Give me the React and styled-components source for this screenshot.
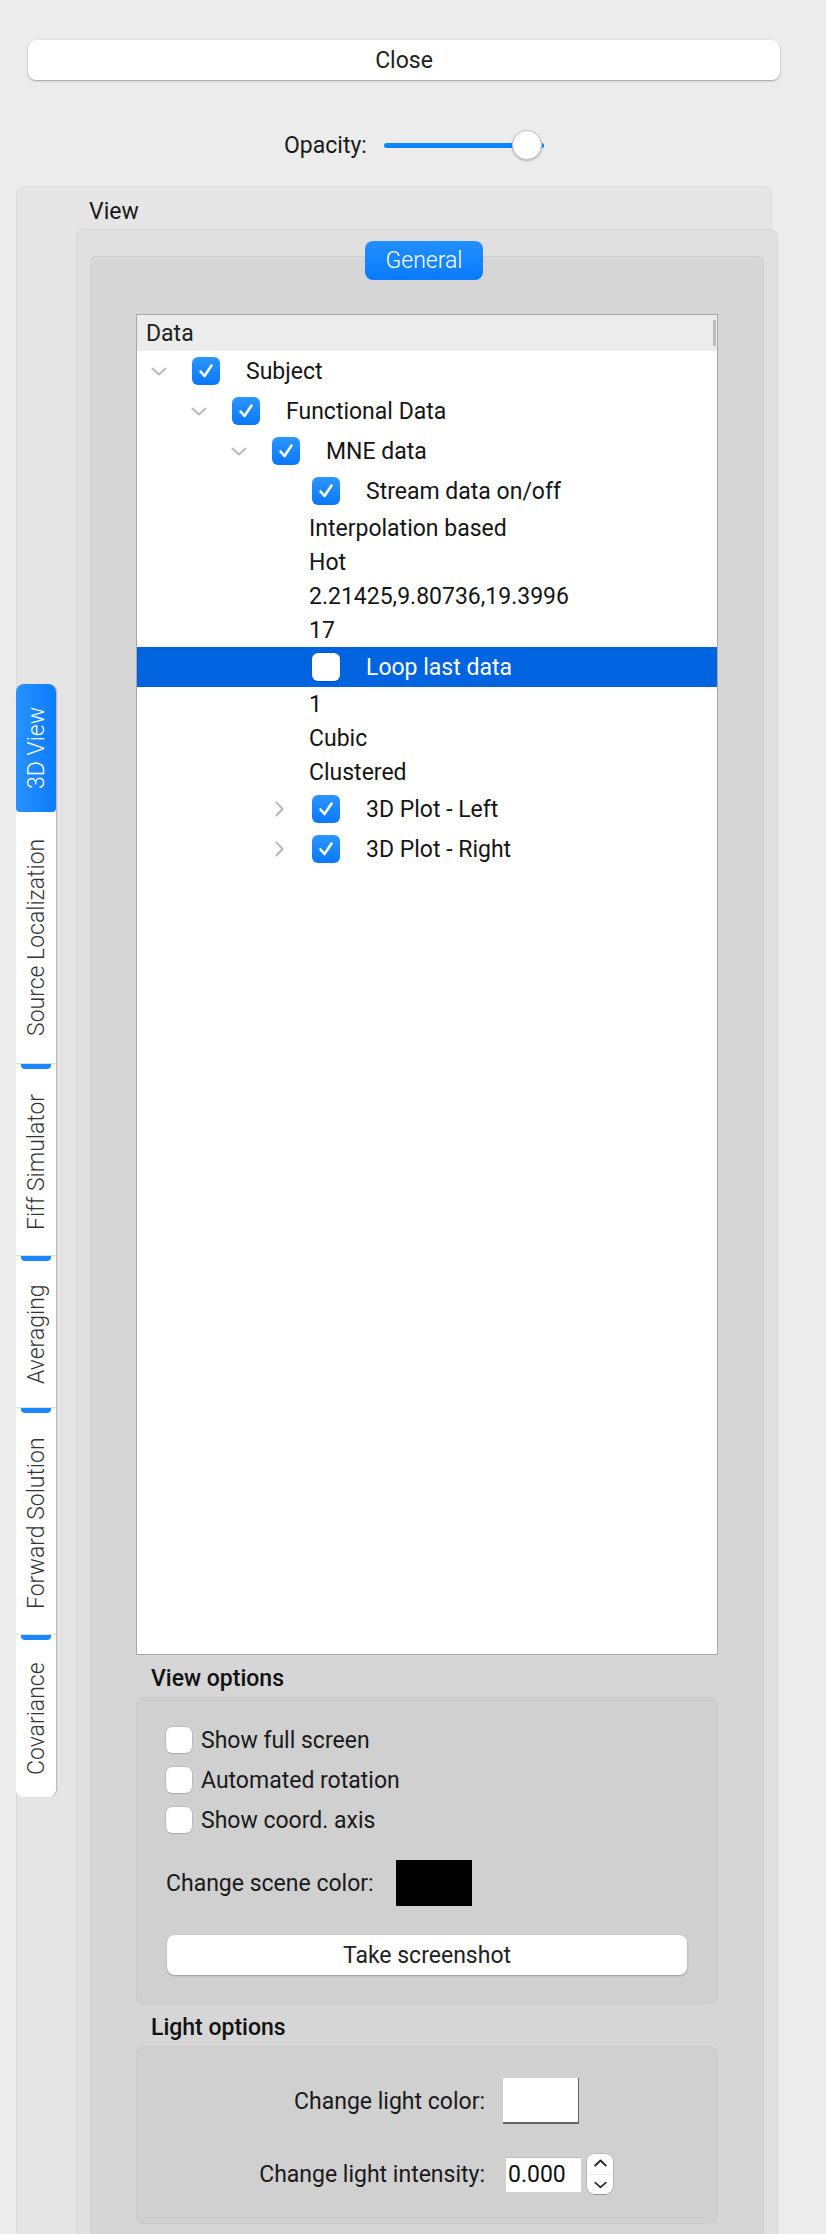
import React from 'react'
import styled, { createGlobalStyle } from 'styled-components'

const GlobalStyle = createGlobalStyle`
  html, body {
    margin: 0;
    padding: 0;
    background: #ececec;
    font-family: Roboto, "Liberation Sans", sans-serif;
    font-size: 23px;
    color: #1a1a1a;
  }
  * { box-sizing: border-box; }
`

const Page = styled.div`
  padding-top: 40px;
  width: 826px;
  overflow: hidden;
`

const CloseButton = styled.button`
  display: block;
  margin-left: 28px;
  width: 752px;
  height: 40px;
  border: none;
  border-radius: 8px;
  background: #fff;
  box-shadow: 0 1px 2px rgba(0, 0, 0, 0.28), 0 0 0 0.5px rgba(0, 0, 0, 0.08);
  font: inherit;
  color: #222;
`

const OpacityRow = styled.div`
  display: flex;
  align-items: center;
  gap: 17px;
  height: 30px;
  margin-top: 50px;
  padding-left: 284px;
`

const SliderTrack = styled.div`
  position: relative;
  width: 160px;
  height: 5px;
  border-radius: 3px;
  background: #0a84ff;
`

const SliderThumb = styled.div`
  position: absolute;
  top: -13px;
  left: ${p => p.$pos}px;
  width: 30px;
  height: 30px;
  border-radius: 50%;
  background: #fff;
  border: 1px solid #c4c4c4;
  box-shadow: 0 1px 2px rgba(0, 0, 0, 0.25);
`

const OuterPanel = styled.div`
  display: flex;
  align-items: flex-start;
  margin: 26px 0 0 16px;
  width: 756px;
  background: #e5e5e5;
  border: 1px solid #dcdcdc;
  border-radius: 8px 8px 0 0;
`

const TabBar = styled.div`
  display: flex;
  flex-direction: column;
  flex: none;
  width: 40px;
  margin-top: 497px;
  margin-left: -1px;
  background: #fff;
  border-radius: 8px;
  box-shadow: 1px 0 1px rgba(0, 0, 0, 0.22);
`

const SideTab = styled.div`
  display: flex;
  flex-direction: column;
  align-items: center;
  flex: none;
  height: ${p => p.$len}px;
  border-top: ${p => (p.$first || p.$afterActive ? 'none' : '1px solid #dedede')};
  border-radius: ${p => (p.$first ? '8px 8px 4px 4px' : p.$last ? '0 0 8px 8px' : '0')};
  background: ${p => (p.$active ? 'linear-gradient(90deg, #2a92ff, #0a7cff)' : '#fff')};
  color: ${p => (p.$active ? '#fff' : '#333')};
`

const TabStrip = styled.div`
  width: 30px;
  height: 5px;
  flex: none;
  border-radius: 0 0 4px 4px;
  background: #1a86ff;
`

const SideTabText = styled.span`
  flex: 1;
  display: flex;
  align-items: center;
  justify-content: center;
  writing-mode: vertical-rl;
  transform: rotate(180deg);
  white-space: nowrap;
  font-weight: 300;
`

const Content = styled.div`
  flex: none;
  width: 702px;
  margin-left: 20px;
  margin-right: -7px;
`

const ViewTitle = styled.div`
  padding: 11px 0 0 13px;
  line-height: 28px;
`

const TabFrame = styled.div`
  margin-top: 3px;
  padding: 11px 13px 0 13px;
  background: #e0e0e0;
  border: 1px solid #d6d6d6;
  border-radius: 8px;
  display: flex;
  flex-direction: column;
`

const TopTab = styled.div`
  align-self: center;
  position: relative;
  z-index: 1;
  width: 118px;
  height: 39px;
  margin-left: -6px;
  margin-bottom: -24px;
  display: flex;
  align-items: center;
  justify-content: center;
  border-radius: 8px;
  background: linear-gradient(180deg, #2290ff, #0a7aff);
  color: #fff;
  font-weight: 300;
`

const Pane = styled.div`
  padding: 57px 45px 30px 45px;
  background: #d6d6d6;
  border: 1px solid #cfcfcf;
  border-radius: 6px;
`

const Tree = styled.div`
  height: 1341px;
  background: #fff;
  border: 1px solid #a9a9a9;
`

const TreeHeader = styled.div`
  display: flex;
  align-items: center;
  justify-content: space-between;
  height: 36px;
  padding-left: 9px;
  background: #ececec;
  color: #222;
`

const HeaderHandle = styled.div`
  width: 3px;
  height: 26px;
  margin-right: 1px;
  background: #bdbdbd;
`

const TreeRow = styled.div`
  display: flex;
  align-items: center;
  height: 40px;
  padding-left: ${p => 13 + p.$level * 40}px;
  background: ${p => (p.$selected ? '#0064e1' : 'transparent')};
  color: ${p => (p.$selected ? '#fff' : '#151515')};
`

const TextRow = styled.div`
  display: flex;
  align-items: center;
  height: 34px;
  padding-left: 172px;
  color: #151515;
`

const Expander = styled.div`
  width: 18px;
  height: 18px;
  flex: none;
  display: flex;
  align-items: center;
  justify-content: center;
`

const CheckBox = styled.div`
  width: ${p => p.$size}px;
  height: ${p => p.$size}px;
  flex: none;
  display: flex;
  align-items: center;
  justify-content: center;
  border-radius: 6px;
  background: ${p => (p.$checked ? 'linear-gradient(180deg, #2b95ff, #0a78ff)' : '#fff')};
  box-shadow: ${p => (p.$checked ? 'none' : '0 0 0 0.5px rgba(0,0,0,0.18), 0 1px 1px rgba(0,0,0,0.12)')};
`

const TreeCheck = styled(CheckBox)`
  margin-left: 24px;
`

const TreeLabel = styled.span`
  margin-left: 26px;
  white-space: nowrap;
`

const GroupTitle = styled.div`
  margin-top: 10px;
  padding-left: 15px;
  line-height: 28px;
  font-weight: 500;
  color: #111;
`

const GroupBox = styled.div`
  margin-top: 4px;
  background: #d0d0d0;
  border: 1px solid #cacaca;
  border-radius: 8px;
  padding: ${p => p.$pad};
`

const OptionRow = styled.div`
  display: flex;
  align-items: center;
  height: 40px;
  gap: 9px;
`

const ColorRow = styled.div`
  display: flex;
  align-items: center;
  gap: 22px;
  margin-top: 20px;
`

const Swatch = styled.div`
  width: 76px;
  height: 46px;
  flex: none;
  background: ${p => p.$color};
  border-right: ${p => (p.$raised ? '1px solid #666' : 'none')};
  border-bottom: ${p => (p.$raised ? '2px solid #666' : 'none')};
`

const WideButton = styled.button`
  display: block;
  width: 520px;
  height: 40px;
  margin-top: 29px;
  margin-left: 1px;
  border: none;
  border-radius: 8px;
  background: #fff;
  box-shadow: 0 1px 2px rgba(0, 0, 0, 0.28);
  font: inherit;
  color: #222;
`

const FormGrid = styled.div`
  display: grid;
  grid-template-columns: 348px auto;
  column-gap: 18px;
  row-gap: 30px;
  align-items: center;
  justify-content: start;
`

const FormLabel = styled.div`
  text-align: right;
  white-space: nowrap;
`

const SpinGroup = styled.div`
  display: flex;
  align-items: center;
  gap: 6px;
  margin-left: 3px;
`

const SpinInput = styled.div`
  width: 75px;
  height: 35px;
  padding-left: 2px;
  display: flex;
  align-items: center;
  background: #fff;
  border-top: 1px solid #bdbdbd;
  color: #111;
`

const SpinButtons = styled.div`
  width: 26px;
  height: 40px;
  display: flex;
  flex-direction: column;
  align-items: center;
  justify-content: space-between;
  padding: 5px 0;
  border-radius: 8px;
  box-shadow: 0 0 0 0.5px rgba(0, 0, 0, 0.2), 0 1px 1px rgba(0, 0, 0, 0.2);
  background: linear-gradient(#fff 49%, #e6e6e6 50%, #fff 54%);
`

const ChevronDown = ({ color = '#b8b8b8', w = 16, h = 9 }) => (
  <svg width={w} height={h} viewBox="0 0 16 9">
    <polyline points="1.5,1.5 8,7.5 14.5,1.5" fill="none" stroke={color} strokeWidth="2" strokeLinecap="round" strokeLinejoin="round" />
  </svg>
)

const ChevronRight = () => (
  <svg width="9" height="16" viewBox="0 0 9 16">
    <polyline points="1.5,1.5 7.5,8 1.5,14.5" fill="none" stroke="#b8b8b8" strokeWidth="2" strokeLinecap="round" strokeLinejoin="round" />
  </svg>
)

const ChevronUp = ({ color, w, h }) => (
  <svg width={w} height={h} viewBox="0 0 16 9">
    <polyline points="1.5,7.5 8,1.5 14.5,7.5" fill="none" stroke={color} strokeWidth="2.4" strokeLinecap="round" strokeLinejoin="round" />
  </svg>
)

const Tick = () => (
  <svg width="16" height="16" viewBox="0 0 16 16">
    <polyline points="2.5,8.5 6.5,13 13.5,2.5" fill="none" stroke="#fff" strokeWidth="2.6" strokeLinecap="round" strokeLinejoin="round" />
  </svg>
)

const sideTabs = [
  { label: '3D View', len: 128, active: true },
  { label: 'Source Localization', len: 251 },
  { label: 'Fiff Simulator', len: 192 },
  { label: 'Averaging', len: 152 },
  { label: 'Forward Solution', len: 227 },
  { label: 'Covariance', len: 163 },
]

const treeRows = [
  { level: 0, expand: 'down', checked: true, label: 'Subject' },
  { level: 1, expand: 'down', checked: true, label: 'Functional Data' },
  { level: 2, expand: 'down', checked: true, label: 'MNE data' },
  { level: 3, checked: true, label: 'Stream data on/off' },
  { text: 'Interpolation based' },
  { text: 'Hot' },
  { text: '2.21425,9.80736,19.3996' },
  { text: '17' },
  { level: 3, checked: false, label: 'Loop last data', selected: true },
  { text: '1' },
  { text: 'Cubic' },
  { text: 'Clustered' },
  { level: 3, expand: 'right', checked: true, label: '3D Plot - Left' },
  { level: 3, expand: 'right', checked: true, label: '3D Plot - Right' },
]

function TreeItem({ row }) {
  if (row.text) return <TextRow>{row.text}</TextRow>
  return (
    <TreeRow $level={row.level} $selected={row.selected}>
      <Expander>
        {row.expand === 'down' && <ChevronDown />}
        {row.expand === 'right' && <ChevronRight />}
      </Expander>
      <TreeCheck $size={28} $checked={row.checked}>{row.checked && <Tick />}</TreeCheck>
      <TreeLabel>{row.label}</TreeLabel>
    </TreeRow>
  )
}

export default function App() {
  return (
    <Page>
      <GlobalStyle />
      <CloseButton>Close</CloseButton>
      <OpacityRow>
        <span>Opacity:</span>
        <SliderTrack>
          <SliderThumb $pos={128} />
        </SliderTrack>
      </OpacityRow>

      <OuterPanel>
        <TabBar>
          {sideTabs.map((t, i) => (
            <SideTab
              key={t.label}
              $len={t.len}
              $active={t.active}
              $first={i === 0}
              $last={i === sideTabs.length - 1}
              $afterActive={i > 0 && sideTabs[i - 1].active}
            >
              {i > 1 && <TabStrip />}
              <SideTabText>{t.label}</SideTabText>
            </SideTab>
          ))}
        </TabBar>

        <Content>
          <ViewTitle>View</ViewTitle>
          <TabFrame>
            <TopTab>General</TopTab>
            <Pane>
              <Tree>
                <TreeHeader>
                  <span>Data</span>
                  <HeaderHandle />
                </TreeHeader>
                {treeRows.map((r, i) => (
                  <TreeItem key={i} row={r} />
                ))}
              </Tree>

              <GroupTitle>View options</GroupTitle>
              <GroupBox $pad="22px 32px 28px 29px">
                {['Show full screen', 'Automated rotation', 'Show coord. axis'].map(o => (
                  <OptionRow key={o}>
                    <CheckBox $size={26} />
                    <span>{o}</span>
                  </OptionRow>
                ))}
                <ColorRow>
                  <span>Change scene color:</span>
                  <Swatch $color="#000" />
                </ColorRow>
                <WideButton>Take screenshot</WideButton>
              </GroupBox>

              <GroupTitle>Light options</GroupTitle>
              <GroupBox $pad="31px 0 29px 0">
                <FormGrid>
                  <FormLabel>Change light color:</FormLabel>
                  <Swatch $color="#fff" $raised />
                  <FormLabel>Change light intensity:</FormLabel>
                  <SpinGroup>
                    <SpinInput>0.000</SpinInput>
                    <SpinButtons>
                      <ChevronUp color="#2a2a2a" w={13} h={8} />
                      <ChevronDown color="#2a2a2a" w={13} h={8} />
                    </SpinButtons>
                  </SpinGroup>
                </FormGrid>
              </GroupBox>
            </Pane>
          </TabFrame>
        </Content>
      </OuterPanel>
    </Page>
  )
}
